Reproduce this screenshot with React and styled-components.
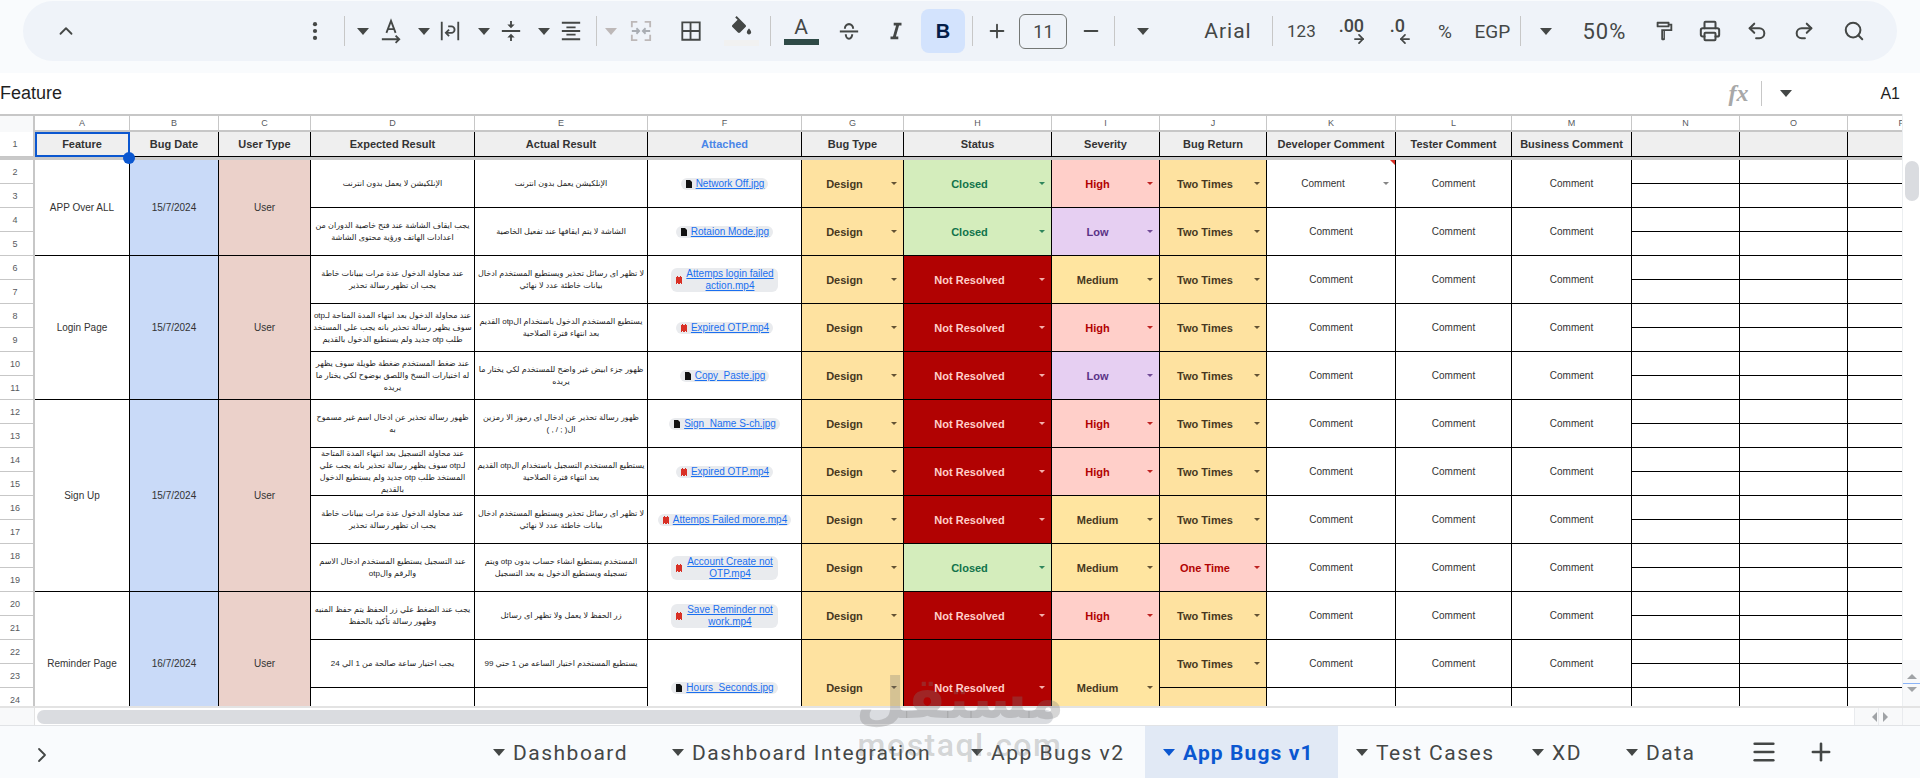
import React from "react";
import styled, { createGlobalStyle } from "styled-components";
import {
  ChevronUp,
  ChevronRight,
  Plus,
  Minus,
  Printer,
  Undo2,
  Redo2,
  Search,
  Menu,
  ArrowRight,
  ArrowLeft,
} from "lucide-react";

const GlobalStyle = createGlobalStyle`
  html, body {
    margin: 0;
    padding: 0;
    background: #fff;
    overflow: hidden;
  }
  * {
    box-sizing: border-box;
  }
`;

const Page = styled.div`
  position: relative;
  width: 1920px;
  height: 778px;
  overflow: hidden;
  display: flex;
  flex-direction: column;
  font-family: "Liberation Sans", "DejaVu Sans", sans-serif;
  color: #444746;
`;

/* top toolbar */
const ToolbarWrap = styled.div`
  height: 73px;
  flex-shrink: 0;
  padding: 1px 23px 0;
  background: #f9fbfd;
`;
const Pill = styled.div`
  height: 60px;
  border-radius: 30px;
  background: #eff3f9;
  display: flex;
  align-items: center;
`;
const Tool = styled.div`
  flex-shrink: 0;
  width: ${(p) => p.$w || 22}px;
  margin-left: ${(p) => p.$ml || 0}px;
  height: 44px;
  display: flex;
  align-items: center;
  justify-content: center;
  color: ${(p) => p.$color || "#444746"};
`;
const ToolText = styled(Tool)`
  font-family: Roboto, "Liberation Sans", sans-serif;
  font-size: ${(p) => p.$size || 18}px;
  letter-spacing: ${(p) => p.$track || 0}px;
  white-space: nowrap;
`;
const Divider = styled.div`
  flex-shrink: 0;
  width: 1px;
  height: 30px;
  margin-left: ${(p) => p.$ml || 0}px;
  background: #c7c7c7;
`;
const ToolCaret = styled.div`
  flex-shrink: 0;
  width: 0;
  height: 0;
  border-left: 6px solid transparent;
  border-right: 6px solid transparent;
  border-top: 7px solid ${(p) => p.$color || "#444746"};
  margin-left: ${(p) => p.$ml || 0}px;
`;
const BoldButton = styled(Tool)`
  width: 44px;
  border-radius: 8px;
  background: #d3e3fd;
  color: #041e49;
  font-family: "Liberation Sans", sans-serif;
  font-weight: 700;
  font-size: 20px;
`;
const SizeBox = styled(Tool)`
  width: 48px;
  height: 35px;
  border: 1px solid #747775;
  border-radius: 6px;
  font-family: Roboto, sans-serif;
  font-size: 18px;
`;
const ColourIcon = styled(Tool)`
  flex-direction: column;
  position: relative;
`;
const ColourBar = styled.div`
  width: 35px;
  height: 6px;
  flex-shrink: 0;
  margin-top: ${(p) => p.$mt || 0}px;
  background: ${(p) => p.$color};
`;
const LetterA = styled.div`
  font-family: Roboto, sans-serif;
  font-size: 21px;
  line-height: 20px;
  color: #444746;
`;
const DecimalStack = styled(Tool)`
  flex-direction: column;
  font-family: Roboto, sans-serif;
  font-weight: 500;
  font-size: 18px;
  line-height: 16px;
`;
const DecimalArrow = styled.div`
  display: flex;
  align-self: ${(p) => p.$align};
  height: 11px;
  align-items: center;
`;

/* formula bar */
const FormulaBar = styled.div`
  height: 41px;
  flex-shrink: 0;
  display: flex;
  align-items: center;
  background: #fff;
  padding-right: 20px;
`;
const FormulaValue = styled.div`
  flex: 1;
  font-size: 18px;
  color: #1f1f1f;
`;
const FxMark = styled.div`
  font-family: "Liberation Serif", serif;
  font-style: italic;
  font-weight: 700;
  font-size: 24px;
  color: #a8a8a8;
`;
const FormulaRule = styled.div`
  width: 1px;
  height: 25px;
  margin-left: 13px;
  background: #c7c7c7;
`;
const CellRef = styled.div`
  margin-left: 88px;
  font-size: 16px;
  color: #1f1f1f;
`;

/* sheet */
const SheetArea = styled.div`
  height: 592px;
  flex-shrink: 0;
  display: flex;
`;
const GridClip = styled.div`
  flex: 1;
  min-width: 0;
  overflow: hidden;
`;
const Grid = styled.div`
  display: grid;
  grid-template-columns: 35px 95px 89px 92px 164px 173px 154px 102px 148px 108px 107px 129px 116px 120px 108px 108px 108px;
  grid-template-rows: 18px 25px 3px repeat(26, 24px);
  width: 1867px;
`;
const Corner = styled.div`
  grid-column: 1;
  grid-row: 1 / span 2;
  background: #f8f9fa;
  border-top: 2px solid #c7c7c7;
  border-right: 2px solid #c7c7c7;
  border-bottom: 2px solid #c7c7c7;
`;
const ColumnLetter = styled.div`
  grid-row: 1;
  grid-column: ${(p) => p.$c};
  display: flex;
  align-items: center;
  justify-content: center;
  font-size: 9px;
  color: #575a5e;
  background: #fff;
  border-top: 2px solid #c7c7c7;
  border-right: 1px solid #c7c7c7;
  border-bottom: 2px solid #c7c7c7;
`;
const RowLabel = styled.div`
  grid-column: 1;
  grid-row: ${(p) => p.$r};
  display: flex;
  align-items: center;
  justify-content: center;
  font-size: 9px;
  padding-right: 3px;
  color: #575a5e;
  background: #fff;
  border-right: 2px solid #c7c7c7;
  border-bottom: 1px solid #c7c7c7;
`;
const FreezeBar = styled.div`
  grid-column: 1 / -1;
  grid-row: 3;
  background: #c9c9c9;
`;
const HeadCell = styled.div`
  position: relative;
  grid-row: 2;
  grid-column: ${(p) => p.$c};
  display: flex;
  align-items: center;
  justify-content: center;
  font-size: 11px;
  font-weight: 700;
  white-space: nowrap;
  color: ${(p) => (p.$link ? "#4a86e8" : "#333")};
  background: #efefef;
  border-right: 1px solid #000;
  border-bottom: 1px solid #000;
`;
const SelectedRing = styled.div`
  position: absolute;
  inset: 0 -1px -1px 0;
  border: 2px solid #0b57d0;
  pointer-events: none;
`;
const SelectionHandle = styled.div`
  position: absolute;
  right: -7px;
  bottom: -9px;
  width: 12px;
  height: 12px;
  border-radius: 50%;
  background: #0b57d0;
  z-index: 2;
`;
const Cell = styled.div`
  position: relative;
  grid-column: ${(p) => p.$c};
  grid-row: ${(p) => p.$r} / span ${(p) => p.$s || 2};
  display: flex;
  align-items: center;
  justify-content: center;
  overflow: hidden;
  text-align: center;
  padding: 0 3px;
  font-size: 10px;
  line-height: 12px;
  color: #333;
  background: ${(p) => p.$bg || "#fff"};
  border-right: 1px solid #000;
  border-bottom: 1px solid #000;
`;
const ArabicCell = styled(Cell).attrs({ dir: "rtl" })`
  padding: 0 2px;
  font-size: 8px;
  line-height: 12px;
  color: #1c1c1c;
`;
const tones = {
  Design: { bg: "#fee2a0", fg: "#473821" },
  Closed: { bg: "#d4edbc", fg: "#11734b" },
  "Not Resolved": { bg: "#b10202", fg: "#ffcfc9" },
  High: { bg: "#ffcfc9", fg: "#b10202" },
  Low: { bg: "#e6cff2", fg: "#5a3286" },
  Medium: { bg: "#ffe5a0", fg: "#473821" },
  "Two Times": { bg: "#fee2a0", fg: "#473821" },
  "One Time": { bg: "#ffcfc9", fg: "#b10202" },
};
const DropCell = styled(Cell)`
  padding: 0 6px 0 0;
  font-size: ${(p) => (p.$plain ? 10 : 11)}px;
  font-weight: ${(p) => (p.$plain ? 400 : 700)};
  background: ${(p) => (p.$tone ? tones[p.$tone].bg : "#fff")};
  color: ${(p) => (p.$tone ? tones[p.$tone].fg : "#333")};
`;
const DropLabel = styled.div`
  flex: 1;
  text-align: center;
`;
const DropCaret = styled.div`
  flex-shrink: 0;
  width: 0;
  height: 0;
  margin-left: 4px;
  border-left: 3px solid transparent;
  border-right: 3px solid transparent;
  border-top: 3px solid currentColor;
  opacity: ${(p) => (p.$soft ? 0.6 : 0.85)};
`;
const CommentFlag = styled.div`
  position: absolute;
  top: 0;
  right: 0;
  width: 0;
  height: 0;
  border-top: 5px solid #d93025;
  border-left: 5px solid transparent;
`;
const Chip = styled.div`
  display: inline-flex;
  align-items: center;
  gap: 4px;
  padding: 0 4px 0 5px;
  min-height: 12px;
  border-radius: 6px;
  background: #e9ebee;
  max-width: 148px;
`;
const ChipLink = styled.a`
  color: #1a6ff0;
  text-decoration: underline;
  font-size: 10px;
  line-height: 12px;
  text-align: center;
  max-width: ${(p) => p.$max || 130}px;
`;
const FileIcon = styled.svg`
  flex-shrink: 0;
  width: 6px;
  height: 8px;
`;

/* scrollbars */
const VScroll = styled.div`
  position: relative;
  width: 18px;
  flex-shrink: 0;
  background: #fff;
  border-left: 1px solid #eceff1;
`;
const VThumb = styled.div`
  position: absolute;
  top: 47px;
  left: 2px;
  width: 14px;
  height: 40px;
  border-radius: 7px;
  background: #dadce0;
`;
const ScrollArrows = styled.div`
  position: absolute;
  left: 0;
  right: 0;
  bottom: 0;
  height: 46px;
  display: flex;
  flex-direction: column;
  background: #f8f9fa;
`;
const ArrowBox = styled.div`
  flex: 1;
  display: flex;
  align-items: center;
  justify-content: center;
  border-bottom: ${(p) => (p.$marked ? "1px solid #8ab4f8" : "none")};
`;
const ArrowGlyph = styled.div`
  width: 0;
  height: 0;
  border-style: solid;
  border-color: transparent;
  border-width: 5px;
  ${(p) => `border-${p.$to}-color: #a0a3a6;`}
  margin: ${(p) =>
    p.$to === "top"
      ? "-5px 0 0"
      : p.$to === "bottom"
      ? "5px 0 0"
      : p.$to === "left"
      ? "0 0 0 -5px"
      : "0 -5px 0 5px"};
`;
const HScrollRow = styled.div`
  height: 19px;
  flex-shrink: 0;
  display: flex;
  align-items: center;
  border-top: 2px solid #e3e3e3;
  background: #fff;
`;
const HCorner = styled.div`
  width: 35px;
  height: 100%;
  flex-shrink: 0;
  background: #f8f9fa;
  border-right: 1px solid #e3e3e3;
`;
const HThumb = styled.div`
  width: 1016px;
  height: 14px;
  margin-left: 2px;
  border-radius: 7px;
  background: #dadce0;
`;
const HArrows = styled.div`
  display: flex;
  height: 100%;
  margin-left: auto;
`;
const HArrowBox = styled.div`
  width: ${(p) => p.$w || 21}px;
  height: 100%;
  display: flex;
  align-items: center;
  justify-content: center;
  background: #f8f9fa;
  border-left: 1px solid #e9ebee;
`;

/* bottom tabs */
const TabBar = styled.div`
  height: 53px;
  flex-shrink: 0;
  display: flex;
  align-items: center;
  padding-left: 30px;
  background: #f9fbfd;
  border-top: 1px solid #e1e3e6;
`;
const CollapseButton = styled.div`
  width: 24px;
  display: flex;
  color: #444746;
  margin-top: 6px;
`;
const Tabs = styled.div`
  display: flex;
  height: 100%;
  margin-left: 421px;
`;
const Tab = styled.div`
  display: flex;
  align-items: center;
  gap: 8px;
  padding: 1px 22px 0 18px;
  width: ${(p) => p.$w}px;
  margin-left: ${(p) => p.$ml || 0}px;
  font-family: Roboto, sans-serif;
  font-size: 21px;
  font-weight: ${(p) => (p.$active ? 700 : 400)};
  letter-spacing: ${(p) => (p.$active ? 1.1 : 1.5)}px;
  white-space: nowrap;
  color: ${(p) => (p.$active ? "#0b57d0" : "#444746")};
  background: ${(p) => (p.$active ? "#e1e9f5" : "transparent")};
`;
const TabCaret = styled.div`
  flex-shrink: 0;
  width: 0;
  height: 0;
  border-left: 6px solid transparent;
  border-right: 6px solid transparent;
  border-top: 7px solid currentColor;
`;
const TabAction = styled.div`
  display: flex;
  color: #444746;
  margin-left: ${(p) => p.$ml}px;
`;

/* watermark lying over the page */
const Watermark = styled.div`
  position: absolute;
  left: 850px;
  top: 663px;
  width: 220px;
  text-align: center;
  color: rgba(120, 120, 120, 0.3);
  pointer-events: none;
  font-family: "DejaVu Sans", sans-serif;
  font-weight: 700;
`;
const WatermarkArabic = styled.div`
  font-size: 57px;
  line-height: 70px;
`;
const WatermarkLatin = styled.div`
  font-family: Roboto, sans-serif;
  font-weight: 500;
  font-size: 32px;
  letter-spacing: 1.5px;
  line-height: 24px;
`;

const DotsIcon = () => (
  <svg width="24" height="24" viewBox="0 0 24 24" fill="currentColor">
    <circle cx="12" cy="4.500" r="2.300" />
    <circle cx="12" cy="12" r="2.300" />
    <circle cx="12" cy="19.500" r="2.300" />
  </svg>
);
const TextRotateIcon = () => (
  <svg width="24" height="28" viewBox="0 0 24 28" fill="none" stroke="currentColor" strokeWidth="2">
    <path d="M7 16 12 3l5 13M8.600 12h6.800" />
    <path d="M2 23h19M17 19l4 4-4 4" />
  </svg>
);
const WrapIcon = () => (
  <svg width="24" height="24" viewBox="0 0 24 24" fill="none" stroke="currentColor" strokeWidth="2">
    <path d="M3 2v20M21 2v20" />
    <path d="M10 7h3.500a3.500 3.500 0 0 1 0 7H8" />
    <path d="M11 10.500 7.500 14l3.500 3.500" />
  </svg>
);
const VAlignIcon = () => (
  <svg width="24" height="24" viewBox="0 0 24 24" fill="currentColor">
    <path d="M8 19h3v4h2v-4h3l-4-4-4 4zm8-14h-3V1h-2v4H8l4 4 4-4zM2 11v2h20v-2H2z" />
  </svg>
);
const HAlignIcon = () => (
  <svg width="24" height="24" viewBox="0 0 24 24" fill="currentColor">
    <path d="M7 15v2h10v-2H7zm-5 7h20v-2H2v2zm0-9h20v-2H2v2zm5-6v2h10V7H7zM2 2v2h20V2H2z" />
  </svg>
);
const MergeIcon = () => (
  <svg width="24" height="24" viewBox="0 0 24 24" fill="none" stroke="#bdb8b8" strokeWidth="2">
    <path d="M8 2H2v6M16 2h6v6M8 22H2v-6M16 22h6v-6" />
    <path d="M2 12h8M7 9l3 3-3 3M22 12h-8M17 9l-3 3 3 3" stroke="#a9adb3" />
  </svg>
);
const BorderIcon = () => (
  <svg width="24" height="24" viewBox="0 0 24 24" fill="currentColor">
    <path d="M1.500 1.500v21h21v-21h-21zm9 19h-7v-7.500h7v7.500zm0-9.500h-7V3.500h7V11zm10 9.500h-8V13h8v7.500zm0-9.500h-8V3.500h8V11z" />
  </svg>
);
const FillIcon = () => (
  <svg width="24" height="22" viewBox="0 0 24 22" fill="currentColor">
    <path d="M16.560 8.940 7.620 0 6.210 1.410l2.380 2.380-5.150 5.150c-.59.59-.59 1.540 0 2.120l5.500 5.500c.29.29.68.44 1.060.44s.77-.15 1.060-.44l5.500-5.500c.59-.58.59-1.530 0-2.120z" />
    <path d="M20 12.500s-2.200 2.200-2.200 3.700c0 1.200 1 2.200 2.200 2.200s2.200-1 2.200-2.200c0-1.500-2.200-3.700-2.200-3.700z" />
  </svg>
);
const ItalicIcon = () => (
  <svg width="24" height="24" viewBox="0 0 24 24" fill="currentColor">
    <path d="M9.500 3v3h2.600l-3.400 12H6v3h8.500v-3h-2.600l3.400-12H18V3z" />
  </svg>
);
const StrikeIcon = () => (
  <svg width="26" height="26" viewBox="0 0 24 24" fill="none" stroke="currentColor" strokeWidth="2.200">
    <path d="M7.500 9.500a4.500 5 0 0 1 9 0" />
    <path d="M2 12.500h20" />
    <path d="M15.500 15.500a3.500 5 0 0 1-7 0" />
  </svg>
);
const RollerIcon = () => (
  <svg width="28" height="28" viewBox="0 0 24 24" fill="currentColor">
    <path
      fillRule="evenodd"
      d="M18 4V3c0-.55-.45-1-1-1H5c-.55 0-1 .45-1 1v4c0 .55.45 1 1 1h12c.55 0 1-.45 1-1V6h1v4H9v11c0 .55.45 1 1 1h2c.55 0 1-.45 1-1v-9h8V4h-3zm-2 2H6V4h10v2zm-4.500 14h-.5v-8h.5v8z"
    />
  </svg>
);

const bugs = [
  {
    row: 2,
    exp: "الإنلكيشن لا يعمل بدون انترنت",
    act: "الإنلكيشن يعمل بدون انترنت",
    file: "Network Off.jpg",
    status: "Closed",
    sev: "High",
    back: "Two Times",
  },
  {
    row: 4,
    exp: "يجب ايقاف الشاشة عند فتح خاصية الدوران من اعدادات الهاتف ورؤية محتوى الشاشة",
    act: "الشاشة لا يتم ايقافها عند تفعيل الخاصية",
    file: "Rotaion Mode.jpg",
    status: "Closed",
    sev: "Low",
    back: "Two Times",
  },
  {
    row: 6,
    exp: "عند محاولة الدخول عدة مرات ببيانات خاطة يجب ان تظهر رسالة تحذير",
    act: "لا تظهر اى رسائل تحذير ويستطيع المستخدم ادخال بيانات خاطئة عدد لا نهائي",
    file: "Attemps login failed action.mp4",
    video: true,
    max: 88,
    status: "Not Resolved",
    sev: "Medium",
    back: "Two Times",
  },
  {
    row: 8,
    exp: "عند محاولة الدخول بعد انتهاء المدة المتاحة لـotp سوف يظهر رسالة تحذير بانه يجب علي المستخد طلب otp جديد ولم يستطيع الدخول بالقديم",
    act: "يستطيع المستخدم الدخول باستخدام الotp القديم بعد انتهاء فترة الصلاحية",
    file: "Expired OTP.mp4",
    video: true,
    status: "Not Resolved",
    sev: "High",
    back: "Two Times",
  },
  {
    row: 10,
    exp: "عند ضغط المستخدم ضغطة طويلة سوف يظهر له اختيارات النسخ واللصق بوضوح لكي يختار ما يريده",
    act: "ظهور جزء ابيض غير واضح للمستخدم لكي يختار ما يريده",
    file: "Copy_Paste.jpg",
    status: "Not Resolved",
    sev: "Low",
    back: "Two Times",
  },
  {
    row: 12,
    exp: "ظهور رسالة تحذير عن ادخال اسم غير مسموح به",
    act: "ظهور رسالة تحذير عن ادخال اى رموز الا رمزين ال( ; / , )",
    file: "Sign_Name S-ch.jpg",
    status: "Not Resolved",
    sev: "High",
    back: "Two Times",
  },
  {
    row: 14,
    exp: "عند محاولة التسجيل بعد انتهاء المدة المتاحة لـotp سوف يظهر رسالة تحذير بانه يجب علي المستخد طلب otp جديد ولم يستطيع الدخول بالقديم",
    act: "يستطيع المستخدم التسجيل باستخدام الotp القديم بعد انتهاء فترة الصلاحية",
    file: "Expired OTP.mp4",
    video: true,
    status: "Not Resolved",
    sev: "High",
    back: "Two Times",
  },
  {
    row: 16,
    exp: "عند محاولة الدخول عدة مرات ببيانات خاطة يجب ان تظهر رسالة تحذير",
    act: "لا تظهر اى رسائل تحذير ويستطيع المستخدم ادخال بيانات خاطئة عدد لا نهائي",
    file: "Attemps Failed more.mp4",
    video: true,
    status: "Not Resolved",
    sev: "Medium",
    back: "Two Times",
  },
  {
    row: 18,
    exp: "عند التسجيل يستطيع المستخدم ادخال الاسم والرقم والotp",
    act: "المستخدم يستطيع انشاء حساب بدون otp ويتم تسجيله ويستطيع الدخول به بعد التسجيل",
    file: "Account Create not OTP.mp4",
    video: true,
    max: 88,
    status: "Closed",
    sev: "Medium",
    back: "One Time",
  },
  {
    row: 20,
    exp: "يجب عند الضغط علي زر الحفظ يتم حفظ المنبه وظهور رسالة تأكيد بالحفظ",
    act: "زر الحفظ لا يعمل ولا تظهر اى رسائل",
    file: "Save Reminder not work.mp4",
    video: true,
    max: 88,
    status: "Not Resolved",
    sev: "High",
    back: "Two Times",
  },
  {
    row: 22,
    exp: "يجب اختيار ساعة صالحة من 1 الي 24",
    act: "يستطيع المستخدم اختيار الساعه من 1 حتي 99",
    file: "Hours_Seconds.jpg",
    status: "Not Resolved",
    sev: "Medium",
    back: "Two Times",
    span: 4,
  },
];

const features = [
  { row: 2, span: 4, name: "APP Over ALL", date: "15/7/2024" },
  { row: 6, span: 6, name: "Login Page", date: "15/7/2024" },
  { row: 12, span: 8, name: "Sign Up", date: "15/7/2024" },
  { row: 20, span: 6, name: "Reminder Page", date: "16/7/2024" },
];

const headers = [
  "Feature",
  "Bug Date",
  "User Type",
  "Expected Result",
  "Actual Result",
  "Attached",
  "Bug Type",
  "Status",
  "Severity",
  "Bug Return",
  "Developer Comment",
  "Tester Comment",
  "Business Comment",
  "",
  "",
  "",
];

const letters = "ABCDEFGHIJKLMNOP".split("");

// sheet row n sits on grid line n + 2 because of the letters row and the freeze bar
const gridRow = (n) => n + 2;

const AttachIcon = ({ video }) =>
  video ? (
    <FileIcon viewBox="0 0 6 8">
      <path d="M0 1h1V0h1v1h2V0h1v1h1v7H5V7H4v1H2V7H1v1H0z" fill="#d93025" />
    </FileIcon>
  ) : (
    <FileIcon viewBox="0 0 6 8">
      <path d="M0 0h4l2 2v6H0z" fill="#111" />
    </FileIcon>
  );

const Drop = ({ c, r, s, tone, children }) => (
  <DropCell $c={c} $r={r} $s={s} $tone={tone}>
    <DropLabel>{children}</DropLabel>
    <DropCaret />
  </DropCell>
);

const BugRow = ({ bug }) => {
  const r = gridRow(bug.row);
  return (
    <>
      <ArabicCell $c={5} $r={r}>
        <span>{bug.exp}</span>
      </ArabicCell>
      <ArabicCell $c={6} $r={r}>
        <span>{bug.act}</span>
      </ArabicCell>
      <Cell $c={7} $r={r} $s={bug.span}>
        <Chip>
          <AttachIcon video={bug.video} />
          <ChipLink $max={bug.max}>{bug.file}</ChipLink>
        </Chip>
      </Cell>
      <Drop c={8} r={r} s={bug.span} tone="Design">
        Design
      </Drop>
      <Drop c={9} r={r} s={bug.span} tone={bug.status}>
        {bug.status}
      </Drop>
      <Drop c={10} r={r} s={bug.span} tone={bug.sev}>
        {bug.sev}
      </Drop>
      <Drop c={11} r={r} tone={bug.back}>
        {bug.back}
      </Drop>
      {bug.row === 2 ? (
        <DropCell $c={12} $r={r} $plain>
          <DropLabel>Comment</DropLabel>
          <DropCaret $soft />
          <CommentFlag />
        </DropCell>
      ) : (
        <Cell $c={12} $r={r}>
          Comment
        </Cell>
      )}
      <Cell $c={13} $r={r}>
        Comment
      </Cell>
      <Cell $c={14} $r={r}>
        Comment
      </Cell>
    </>
  );
};

const rowNumbers = Array.from({ length: 24 }, (_, i) => i + 2);

const SheetGrid = () => (
  <Grid>
    <Corner />
    {letters.map((l, i) => (
      <ColumnLetter key={l} $c={i + 2}>
        {l}
      </ColumnLetter>
    ))}
    <RowLabel $r={2}>1</RowLabel>
    {headers.map((h, i) => (
      <HeadCell key={i} $c={i + 2} $link={h === "Attached"}>
        {h}
        {i === 0 && (
          <SelectedRing>
            <SelectionHandle />
          </SelectedRing>
        )}
      </HeadCell>
    ))}
    <FreezeBar />
    {rowNumbers.map((n) => (
      <RowLabel key={n} $r={gridRow(n)}>
        {n}
      </RowLabel>
    ))}
    {features.map((f) => (
      <React.Fragment key={f.row}>
        <Cell $c={2} $r={gridRow(f.row)} $s={f.span}>
          {f.name}
        </Cell>
        <Cell $c={3} $r={gridRow(f.row)} $s={f.span} $bg="#c9daf8">
          {f.date}
        </Cell>
        <Cell $c={4} $r={gridRow(f.row)} $s={f.span} $bg="#ebd1ca">
          User
        </Cell>
      </React.Fragment>
    ))}
    {bugs.map((b) => (
      <BugRow key={b.row} bug={b} />
    ))}
    <Cell $c={5} $r={gridRow(24)} />
    <Cell $c={6} $r={gridRow(24)} />
    <Cell $c={11} $r={gridRow(24)} $bg="#fee2a0" />
    <Cell $c={12} $r={gridRow(24)} />
    <Cell $c={13} $r={gridRow(24)} />
    <Cell $c={14} $r={gridRow(24)} />
    {rowNumbers.map((n) => (
      <React.Fragment key={n}>
        <Cell $c={15} $r={gridRow(n)} $s={1} />
        <Cell $c={16} $r={gridRow(n)} $s={1} />
        <Cell $c={17} $r={gridRow(n)} $s={1} />
      </React.Fragment>
    ))}
  </Grid>
);

const Toolbar = () => (
  <ToolbarWrap>
    <Pill>
      <Tool $ml={32}>
        <ChevronUp size={26} strokeWidth={2} />
      </Tool>
      <Tool $ml={227}>
        <DotsIcon />
      </Tool>
      <Divider $ml={17.5} />
      <ToolCaret $ml={12} />
      <Tool $ml={11.5}>
        <TextRotateIcon />
      </Tool>
      <ToolCaret $ml={16} />
      <Tool $ml={9}>
        <WrapIcon />
      </Tool>
      <ToolCaret $ml={17} />
      <Tool $ml={10}>
        <VAlignIcon />
      </Tool>
      <ToolCaret $ml={16} />
      <Tool $ml={10}>
        <HAlignIcon />
      </Tool>
      <Divider $ml={13.5} />
      <ToolCaret $ml={8.5} $color="#bdb8b8" />
      <Tool $ml={13}>
        <MergeIcon />
      </Tool>
      <Tool $ml={28}>
        <BorderIcon />
      </Tool>
      <ColourIcon $ml={28}>
        <FillIcon />
        <ColourBar $color="#f1f1f1" $mt={2} />
      </ColourIcon>
      <Divider $ml={17.5} />
      <ColourIcon $ml={19.5}>
        <LetterA>A</LetterA>
        <ColourBar $color="#2f4a47" $mt={2} />
      </ColourIcon>
      <Tool $ml={26}>
        <StrikeIcon />
      </Tool>
      <Tool $ml={25}>
        <ItalicIcon />
      </Tool>
      <BoldButton $ml={14}>B</BoldButton>
      <Divider $ml={6.5} />
      <Tool $ml={13.5}>
        <Plus size={28} strokeWidth={2} />
      </Tool>
      <SizeBox $ml={11.4}>11</SizeBox>
      <Tool $ml={13}>
        <Minus size={28} strokeWidth={2} />
      </Tool>
      <Divider $ml={12} />
      <ToolCaret $ml={22} />
      <ToolText $ml={55.6} $w={46} $size={21} $track={1}>
        Arial
      </ToolText>
      <Divider $ml={21.4} />
      <ToolText $ml={13} $w={30} $size={17}>
        123
      </ToolText>
      <DecimalStack $ml={20} $w={30}>
        .00
        <DecimalArrow $align="flex-end">
          <ArrowRight size={14} strokeWidth={3} />
        </DecimalArrow>
      </DecimalStack>
      <DecimalStack $ml={16} $w={30}>
        .0
        <DecimalArrow $align="flex-end">
          <ArrowLeft size={14} strokeWidth={3} />
        </DecimalArrow>
      </DecimalStack>
      <ToolText $ml={21.6} $size={19}>
        %
      </ToolText>
      <ToolText $ml={16.4} $w={40} $size={19}>
        EGP
      </ToolText>
      <Divider $ml={8} />
      <ToolCaret $ml={18.6} />
      <ToolText $ml={30.4} $w={44} $size={22} $track={1}>
        50%
      </ToolText>
      <Tool $ml={27}>
        <RollerIcon />
      </Tool>
      <Tool $ml={24}>
        <Printer size={28} strokeWidth={2.2} />
      </Tool>
      <Tool $ml={25}>
        <Undo2 size={26} strokeWidth={2.2} />
      </Tool>
      <Tool $ml={25}>
        <Redo2 size={26} strokeWidth={2.2} />
      </Tool>
      <Tool $ml={28}>
        <Search size={28} strokeWidth={2.2} />
      </Tool>
    </Pill>
  </ToolbarWrap>
);

const tabs = [
  { name: "Dashboard", w: 178 },
  { name: "Dashboard Integration", w: 297, ml: 1 },
  { name: "App Bugs v2", w: 191, ml: 2 },
  { name: "App Bugs v1", w: 193, ml: 1, active: true },
  { name: "Test Cases", w: 176 },
  { name: "XD", w: 94 },
  { name: "Data", w: 107 },
];

export default function App() {
  return (
    <Page>
      <GlobalStyle />
      <Toolbar />
      <FormulaBar>
        <FormulaValue>Feature</FormulaValue>
        <FxMark>fx</FxMark>
        <FormulaRule />
        <ToolCaret $ml={18} />
        <CellRef>A1</CellRef>
      </FormulaBar>
      <SheetArea>
        <GridClip>
          <SheetGrid />
        </GridClip>
        <VScroll>
          <VThumb />
          <ScrollArrows>
            <ArrowBox $marked>
              <ArrowGlyph $to="bottom" />
            </ArrowBox>
            <ArrowBox>
              <ArrowGlyph $to="top" />
            </ArrowBox>
          </ScrollArrows>
        </VScroll>
      </SheetArea>
      <HScrollRow>
        <HCorner />
        <HThumb />
        <HArrows>
          <HArrowBox $w={24}>
            <ArrowGlyph $to="right" />
          </HArrowBox>
          <HArrowBox $w={24}>
            <ArrowGlyph $to="left" />
          </HArrowBox>
          <HArrowBox $w={18} />
        </HArrows>
      </HScrollRow>
      <TabBar>
        <CollapseButton>
          <ChevronRight size={24} strokeWidth={1.8} />
        </CollapseButton>
        <Tabs>
          {tabs.map((t) => (
            <Tab key={t.name} $w={t.w} $ml={t.ml} $active={t.active}>
              <TabCaret />
              {t.name}
            </Tab>
          ))}
        </Tabs>
        <TabAction $ml={35}>
          <Menu size={28} strokeWidth={2.2} />
        </TabAction>
        <TabAction $ml={29}>
          <Plus size={28} strokeWidth={2.2} />
        </TabAction>
      </TabBar>
      <Watermark>
        <WatermarkArabic>مستقل</WatermarkArabic>
        <WatermarkLatin>mostaql.com</WatermarkLatin>
      </Watermark>
    </Page>
  );
}
